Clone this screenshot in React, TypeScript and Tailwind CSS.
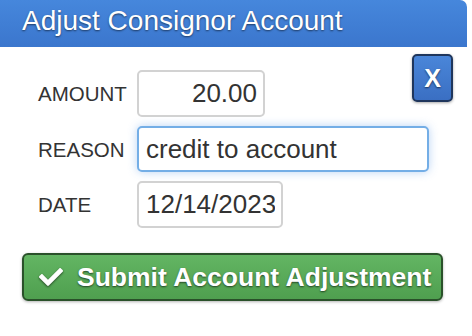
import { FaCheck } from 'react-icons/fa';

const font = "font-['Liberation_Sans',Arial,sans-serif]";

function Field({ label, value, width, height, align = 'left', focused = false }: {
    label: string;
    value: string;
    width: string;
    height: string;
    align?: 'left' | 'right';
    focused?: boolean;
}) {
    return (
        <div className="flex items-center">
            <label className="w-[99px] text-[20.5px] text-[#333] leading-none pt-[2px]">{label}</label>
            <input
                readOnly
                value={value}
                className={`${width} ${height} ${font} rounded-[5px] bg-white pl-[7px] pr-[6px] text-[26px] text-[#333] outline-none ${
                    align === 'right' ? 'text-right' : 'text-left pr-0'
                } ${
                    focused
                        ? 'border-2 border-[#74aee6] shadow-[0_0_10px_rgba(102,160,233,0.45)]'
                        : 'border-2 border-[#d2d2d2]'
                }`}
            />
        </div>
    );
}

export default function App() {
    return (
        <div className={`relative w-[472px] h-[336px] bg-white overflow-hidden ${font}`}>
            {/* Title bar */}
            <div className="w-[467px] h-[47px] rounded-tr-[7px] bg-gradient-to-b from-[#4687dc] to-[#3b76cd] pl-[22px] pt-[4px]">
                <h1 className="text-[28px] leading-[34px] text-white [text-shadow:0_1px_2px_rgba(0,0,0,0.55)]">
                    Adjust Consignor Account
                </h1>
            </div>

            {/* Close button */}
            <button className="absolute left-[412px] top-[54px] w-[41px] h-[48px] rounded-[5px] border-2 border-[#1f365c] bg-gradient-to-b from-[#4a86d9] to-[#3a6fc3] shadow-[0_1px_3px_rgba(0,0,0,0.35)] flex items-center justify-center text-white font-bold text-[25px] leading-none [text-shadow:0_1px_2px_rgba(0,0,0,0.6)]">
                X
            </button>

            {/* Form */}
            <div className="pl-[38px] pt-[23px] flex flex-col gap-[9px]">
                <Field label="AMOUNT" value="20.00" width="w-[128px]" height="h-[47px]" align="right" />
                <Field label="REASON" value="credit to account" width="w-[292px]" height="h-[46px]" focused />
                <Field label="DATE" value="12/14/2023" width="w-[146px]" height="h-[47px]" />
            </div>

            {/* Submit */}
            <div className="pl-[22px] pt-[25px]">
                <button className="w-[421px] h-[48px] rounded-[6px] border-2 border-[#2a512a] bg-gradient-to-b from-[#63b563] to-[#4f9f4f] shadow-[0_1px_3px_rgba(0,0,0,0.3)] flex items-center pl-[15px] text-white font-bold text-[26.5px] leading-none [text-shadow:0_1px_2px_rgba(0,0,0,0.6)]">
                    <FaCheck size={24} className="drop-shadow-[0_1px_1px_rgba(0,0,0,0.6)]" />
                    <span className="ml-[14px]">Submit Account Adjustment</span>
                </button>
            </div>
        </div>
    );
}
